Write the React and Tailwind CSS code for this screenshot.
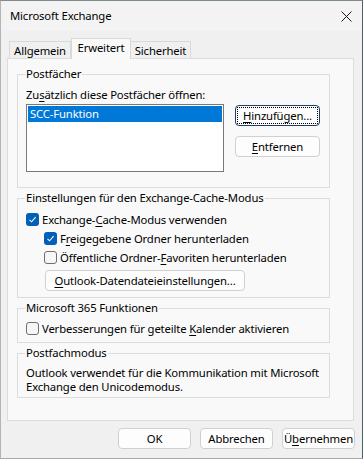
import React from "react";

function Check({ checked }) {
  if (checked) {
    return (
      <span className="flex h-[13px] w-[13px] shrink-0 items-center justify-center rounded-[3px] bg-[#005fb8]">
        <svg width="9" height="9" viewBox="0 0 9 9">
          <path d="M1.5 4.8 L3.6 6.8 L7.6 2.2" fill="none" stroke="#fff" strokeWidth="1.1" />
        </svg>
      </span>
    );
  }
  return <span className="block h-[13px] w-[13px] shrink-0 rounded-[3px] border border-[#6f6f6f] bg-[#f6f6f6]" />;
}

function Btn({ children, className = "", focus = false }) {
  return (
    <div
      className={
        "flex h-[21px] items-center justify-center whitespace-nowrap rounded-[4px] border bg-[#fdfdfd] leading-[16px] text-black " +
        (focus ? "border-[#1c3f66] p-[1px] " : "border-[#d0d0d0] ") +
        className
      }
    >
      {focus ? (
        <div className="flex h-full w-full items-center justify-center border border-dotted border-black">{children}</div>
      ) : (
        children
      )}
    </div>
  );
}

function Group({ title, className = "", children }) {
  return (
    <fieldset className={"w-[313px] border border-[#dcdcdc] " + className}>
      <legend className="ml-[7px] px-[1px] leading-[16px] text-black">{title}</legend>
      {children}
    </fieldset>
  );
}

export default function App() {
  return (
    <div className="flex h-[459px] w-[363px] flex-col whitespace-nowrap border-t border-r border-b border-l border-t-[#7d8b8b] border-r-[#4a6262] border-b-[#a9a9a9] border-l-[#b4b4b4] bg-[#f0f0f0] font-['Noto_Sans','Open_Sans',sans-serif] text-[11.3px] tracking-[-0.15px] text-black">
      {/* Title bar */}
      <div className="flex h-[30px] shrink-0 items-center justify-between bg-[#f3f3f3] pl-[9px] pr-[10px]">
        <span className="leading-[16px]">Microsoft Exchange</span>
        <svg width="11" height="11" viewBox="0 0 11 11">
          <path d="M0.5 0.5 L10.5 10.5 M10.5 0.5 L0.5 10.5" stroke="#1a1a1a" strokeWidth="1" />
        </svg>
      </div>

      {/* Tabs */}
      <div className="flex h-[27px] shrink-0 items-end pl-[8px]">
        <div className="flex h-[17px] w-[62px] items-center justify-center border border-b-0 border-[#d9d9d9] bg-[#f0f0f0] leading-[15px]">
          Allgemein
        </div>
        <div className="relative z-10 -mb-px flex h-[21px] w-[60px] items-start justify-center border border-b-0 border-[#d9d9d9] bg-[#f9f9f9] pt-[1px] leading-[15px]">
          Erweitert
        </div>
        <div className="flex h-[17px] w-[60px] items-center justify-center border border-b-0 border-l-0 border-[#d9d9d9] bg-[#f0f0f0] leading-[15px]">
          Sicherheit
        </div>
      </div>

      {/* Panel */}
      <div className="mx-[6px] flex h-[363px] w-[347px] shrink-0 flex-col border border-[#dcdcdc] bg-[#f9f9f9] pl-[9px] pt-[7px]">
        <Group title="Postfächer">
          <div className="px-[8px] pb-[15px] pt-[5px]">
            <div className="leading-[16px]">
              Zu<u className="underline-offset-2">s</u>ätzlich diese Postfächer öffnen:
            </div>
            <div className="mt-[1px] flex">
              <div className="h-[68px] w-[198px] border border-[#7a7a7a] bg-white p-[1px]">
                <div className="h-[16px] bg-[#0078d7] pl-[2px] leading-[16px] text-white">SCC-Funktion</div>
              </div>
              <div className="ml-[11px] flex flex-col pt-[1px]">
                <Btn focus className="w-[85px]">
                  <span>
                    <u className="underline-offset-2">H</u>inzufügen...
                  </span>
                </Btn>
                <Btn className="mt-[10px] w-[85px]">
                  <span>
                    <u className="underline-offset-2">E</u>ntfernen
                  </span>
                </Btn>
              </div>
            </div>
          </div>
        </Group>

        <Group title="Einstellungen für den Exchange-Cache-Modus" className="mt-[2px]">
          <div className="pb-[6px] pl-[8px] pt-[4px]">
            <div className="flex h-[19px] items-center gap-[3px]">
              <Check checked />
              <span className="leading-[16px]">
                Exchange-<u className="underline-offset-2">C</u>ache-Modus verwenden
              </span>
            </div>
            <div className="ml-[18px] flex h-[19px] items-center gap-[3px]">
              <Check checked />
              <span className="leading-[16px]">
                F<u className="underline-offset-2">r</u>eigegebene Ordner herunterladen
              </span>
            </div>
            <div className="ml-[18px] flex h-[19px] items-center gap-[3px]">
              <Check />
              <span className="leading-[16px]">
                Öffentliche Ordner-<u className="underline-offset-2">F</u>avoriten herunterladen
              </span>
            </div>
            <Btn className="ml-[19px] mt-[3px] w-[200px]">
              <span>
                <u className="underline-offset-2">O</u>utlook-Datendateieinstellungen...
              </span>
            </Btn>
          </div>
        </Group>

        <Group title="Microsoft 365 Funktionen" className="mt-[2px]">
          <div className="pb-[4px] pl-[8px] pt-[3px]">
            <div className="flex h-[19px] items-center gap-[3px]">
              <Check />
              <span className="leading-[16px]">
                Verbesserungen für geteilte <u className="underline-offset-2">K</u>alender aktivieren
              </span>
            </div>
          </div>
        </Group>

        <Group title="Postfachmodus" className="mt-[2px]">
          <div className="pb-[3px] pl-[8px] pt-[5px] leading-[14px]">
            Outlook verwendet für die Kommunikation mit Microsoft
            <br />
            Exchange den Unicodemodus.
          </div>
        </Group>
      </div>

      {/* Bottom buttons */}
      <div className="mt-[7px] flex justify-end gap-[9px] pr-[7px]">
        <Btn className="w-[73px]">OK</Btn>
        <Btn className="w-[73px]">Abbrechen</Btn>
        <Btn className="w-[73px]">
          <span>
            Ü<u className="underline-offset-2">b</u>ernehmen
          </span>
        </Btn>
      </div>
    </div>
  );
}
